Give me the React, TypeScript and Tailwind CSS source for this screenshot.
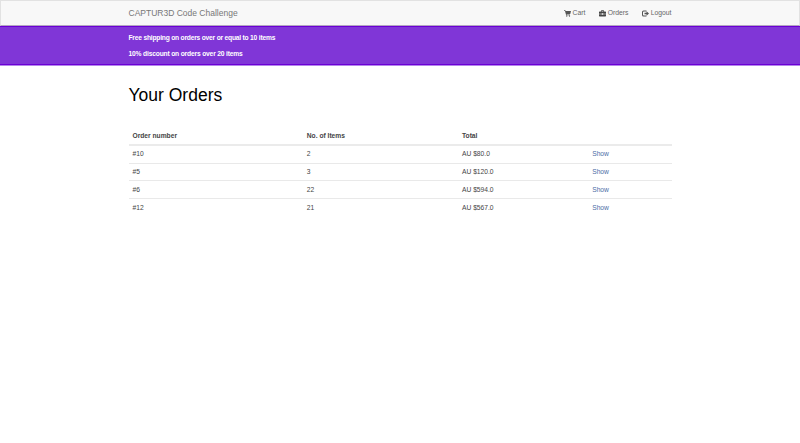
import type { ReactNode } from "react";

const orders = [
  { id: "#10", items: "2", total: "AU $80.0" },
  { id: "#5", items: "3", total: "AU $120.0" },
  { id: "#6", items: "22", total: "AU $594.0" },
  { id: "#12", items: "21", total: "AU $567.0" },
];

function NavLink({ icon, children }: { icon: ReactNode; children: ReactNode }) {
  return (
    <a className="flex items-center gap-[1.500px] text-[6.800px] leading-[10px] text-[#666]" href="#">
      {icon}
      <span>{children}</span>
    </a>
  );
}

const CartIcon = () => (
  <svg className="h-[7px] w-[7px]" viewBox="0 0 14 14" fill="#555">
    <path d="M0 .5h2.700l.7 1.700H14L12.500 8H5.200l.3 1.200H12v1.300H4.300L2 2H0z" />
    <circle cx="5.500" cy="12" r="1.300" />
    <circle cx="11" cy="12" r="1.300" />
  </svg>
);

const CaseIcon = () => (
  <svg className="h-[7px] w-[7px]" viewBox="0 0 14 14" fill="#444">
    <path d="M4 3V1.500L5 .500h4l1 1V3h3l1 1v3.500H8.500v-1h-3v1H0V4l1-1zM5.300 3h3.400V1.800H5.300zM0 8.500h5.500v1h3v-1H14V12l-1 1H1l-1-1z" />
  </svg>
);

const LogoutIcon = () => (
  <svg className="h-[7px] w-[7px]" viewBox="0 0 14 14" fill="#555">
    <path d="M9 1H3Q0 1 0 4v6q0 3 3 3h6v-2H3.500Q2 11 2 9.500v-5Q2 3 3.500 3H9z" />
    <path d="M9 2.500 14 7l-5 4.500V8.500H5v-3h4z" />
  </svg>
);

const grid = "grid grid-cols-[174.300px_155.200px_130.200px_83px] pl-1";

export default function App() {
  return (
    <div className="flex h-[443px] w-[800px] flex-col overflow-hidden rounded-b-[2px] bg-white font-['Liberation_Sans',Arial,sans-serif] text-[6.7px] text-[#444]">
      <header className="h-[26px] shrink-0 border border-[#e2e2e2] border-b-[#b3a6c2] bg-[#f8f8f8]">
        <div className="mx-auto flex h-6 w-[543px] items-center justify-between">
          <a className="text-[8.500px] leading-[12px] text-[#777]" href="#">CAPTUR3D Code Challenge</a>
          <nav className="flex items-center gap-[13.800px]">
            <NavLink icon={<CartIcon />}>Cart</NavLink>
            <NavLink icon={<CaseIcon />}>Orders</NavLink>
            <NavLink icon={<LogoutIcon />}>Logout</NavLink>
          </nav>
        </div>
      </header>
      <section className="h-[40px] shrink-0 border-b border-[#b585ec] bg-[#8036d7]">
        <div className="h-[39px] border-y border-[#6b00d4]">
          <div className="mx-auto flex w-[543px] flex-col gap-[6px] pt-[6px] text-[6.700px] font-bold leading-[10px] tracking-[-0.215px] text-white">
            <p><span>Free shipping on orders over or equal to 10 items</span></p>
            <p><span className="tracking-[-0.175px]">10% discount on orders over 20 items</span></p>
          </div>
        </div>
      </section>
      <main className="mx-auto w-[543px] pt-[19px]">
        <h1 className="text-[17.500px] leading-5 text-black">Your Orders</h1>
        <div className="mt-[22px]">
          <div className={`${grid} h-[19px] items-center border-b-2 border-[#ebebeb] pt-[2px] font-bold tracking-[-0.010px]`}>
            <span>Order number</span>
            <span>No. of Items</span>
            <span>Total</span>
          </div>
          {orders.map((order) => (
            <div
              key={order.id}
              className={`${grid} h-[17.700px] items-center border-b border-[#e9e9e9] last:border-b-0`}
            >
              <span>{order.id}</span>
              <span>{order.items}</span>
              <span>{order.total}</span>
              <a href="#" className="text-[#4b6ca6]">Show</a>
            </div>
          ))}
        </div>
      </main>
    </div>
  );
}
